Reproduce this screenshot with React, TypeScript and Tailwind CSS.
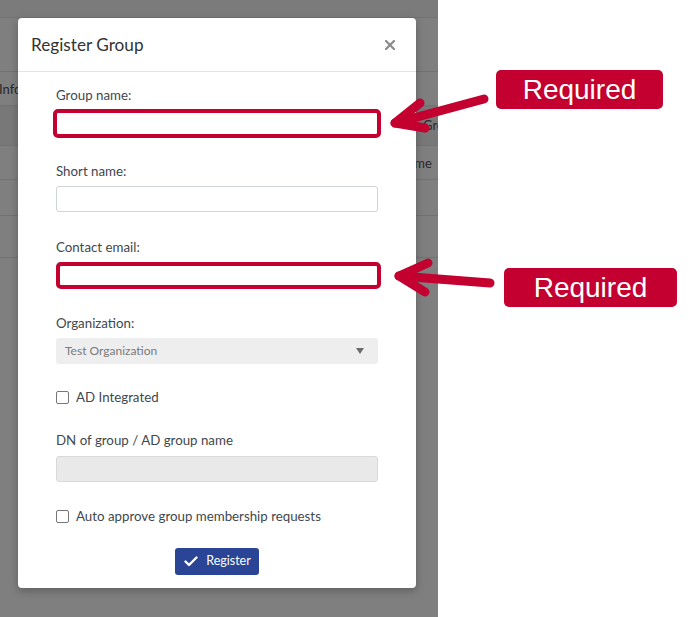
import type { ReactNode } from "react";

function Label({ children }: { children: ReactNode }) {
  return <p className="h-[18px] text-[13.3px] leading-[18px] text-[#41474e]">{children}</p>;
}

function TextInput({ disabled = false }: { disabled?: boolean }) {
  return (
    <div
      className={
        disabled
          ? "h-[26px] w-full rounded-[3px] border border-[#d9d9d9] bg-[#e9e9e9]"
          : "h-[26px] w-full rounded-[3px] border border-[#ced4da] bg-white"
      }
    />
  );
}

function RequiredMark({ className }: { className: string }) {
  return <div className={`pointer-events-none absolute rounded-[5px] border-[4px] border-[#c3002f] ${className}`} />;
}

function CheckRow({ label, className }: { label: string; className: string }) {
  return (
    <label className={`flex h-[18px] items-center gap-[7px] ${className}`}>
      <span className="h-[13px] w-[13px] rounded-[2px] border border-[#767676] bg-white" />
      <span className="text-[13.3px] leading-[18px] text-[#41474e]">{label}</span>
    </label>
  );
}

function RequiredBadge({ className }: { className: string }) {
  return (
    <div
      className={`absolute flex h-[39px] items-center justify-center rounded-[5px] bg-[#c3002f] font-['Liberation_Sans',Arial,sans-serif] text-[28px] text-white ${className}`}
    >
      Required
    </div>
  );
}

function BackgroundTable() {
  return (
    <div className="flex flex-col text-[13px] text-[#2a2a2a]">
      <div className="h-[18px] border-b border-[#727272] bg-[#7b7b7b]" />
      <div className="h-[54px] border-b border-[#727272]" />
      <div className="flex h-[34px] items-center border-b border-[#727272] pt-[2px]">
        <span className="-ml-[1px]">Info</span>
      </div>
      <div className="flex h-[40px] items-center border-b border-[#727272] bg-[#787878] pl-[423px]">
        <span>Gro</span>
      </div>
      <div className="flex h-[34px] items-center border-b border-[#727272] pl-[398px] pt-[2px]">
        <span>Name</span>
      </div>
      <div className="h-[36px] border-b border-[#727272]" />
      <div className="h-[42px] border-b border-[#727272]" />
    </div>
  );
}

export default function App() {
  return (
    <div className="relative flex h-[617px] w-[699px] overflow-hidden bg-white font-['Lato','Open_Sans',sans-serif]">
      <div className="relative h-full w-[438px] overflow-hidden bg-[#7f7f7f]">
        <BackgroundTable />

        <div className="absolute left-[18px] top-[18px] w-[398px] rounded-[4px] bg-white shadow-[0_3px_9px_rgba(0,0,0,0.25)]">
          <div className="flex h-[54px] items-center justify-between border-b border-[#e3e3e3] pl-[13px] pr-[21px]">
            <h2 className="text-[17.2px] leading-[22px] text-[#333]">Register Group</h2>
            <svg width="10" height="10" viewBox="0 0 10 10">
              <path d="M1 1L9 9M9 1L1 9" stroke="#8a8a8a" strokeWidth="2.2" strokeLinecap="square" />
            </svg>
          </div>

          <div className="px-[38px] pb-[13px] pt-[14px]">
            <div>
              <Label>Group name:</Label>
              <div className="relative mt-[6px]">
                <TextInput />
                <RequiredMark className="-left-[3px] -right-[3px] -top-[1px] -bottom-[2px]" />
              </div>
            </div>

            <div className="mt-[26px]">
              <Label>Short name:</Label>
              <div className="mt-[6px]">
                <TextInput />
              </div>
            </div>

            <div className="mt-[26px]">
              <Label>Contact email:</Label>
              <div className="relative mt-[6px]">
                <TextInput />
                <RequiredMark className="left-0 -right-[3px] top-0 -bottom-[1px]" />
              </div>
            </div>

            <div className="mt-[26px]">
              <Label>Organization:</Label>
              <div className="mt-[6px] flex h-[26px] items-center justify-between rounded-[3px] bg-[#eeeeef] pl-[9px] pr-[14px]">
                <span className="text-[12px] text-[#7a7a7a]">Test Organization</span>
                <svg width="8" height="6" viewBox="0 0 8 6">
                  <path d="M0 0H8L4 6Z" fill="#6b6b6b" />
                </svg>
              </div>
            </div>

            <CheckRow label="AD Integrated" className="mt-[24px]" />

            <div className="mt-[25px]">
              <Label>DN of group / AD group name</Label>
              <div className="mt-[7px]">
                <TextInput disabled />
              </div>
            </div>

            <CheckRow label="Auto approve group membership requests" className="mt-[25px]" />

            <div className="mt-[23px] flex justify-center">
              <button className="flex h-[27px] items-center gap-[8px] rounded-[3px] bg-[#2a4595] pl-[9px] pr-[8px] text-[12.5px] text-white">
                <svg width="14" height="11" viewBox="0 0 14 11">
                  <path d="M1.5 5.5L5 9L12.5 1.5" fill="none" stroke="white" strokeWidth="2.4" strokeLinecap="round" strokeLinejoin="round" />
                </svg>
                Register
              </button>
            </div>
          </div>
        </div>
      </div>

      <RequiredBadge className="left-[496px] top-[70px] w-[167px]" />
      <RequiredBadge className="left-[504px] top-[268px] w-[173px]" />

      <svg className="pointer-events-none absolute inset-0" width="699" height="617" viewBox="0 0 699 617">
        <g fill="none" stroke="#c3002f" strokeWidth="9" strokeLinecap="round" strokeLinejoin="round">
          <path d="M484 99L395 123" />
          <path d="M420 103L395 123L425 128" />
          <path d="M490 283L399 276" />
          <path d="M428 263L399 276L425 292" />
        </g>
      </svg>
    </div>
  );
}
